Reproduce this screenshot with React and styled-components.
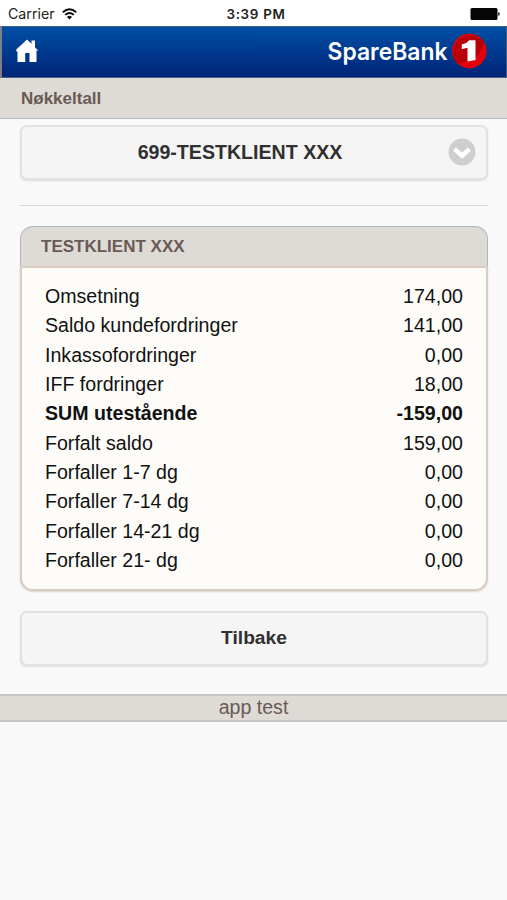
import React from 'react'
import styled, { createGlobalStyle } from 'styled-components'

const GlobalStyle = createGlobalStyle`
  * {
    box-sizing:border-box;
  }
  body {
    margin:0;
    background-color:#f9f9f9;
    font-family:"Liberation Sans", Arial, sans-serif;
    font-size:19.6px;
    color:#111;
  }
`
const Page = styled.div`
  display:flex;
  flex-direction:column;
  min-height:100vh;
`
const StatusBar = styled.div`
  display:grid;
  grid-template-columns:1fr auto 1fr;
  align-items:center;
  height:26px;
  padding:1px 7px 0 8px;
  background-color:#fff;
  font-family:Inter, sans-serif;
  font-size:13.4px;
  color:#222;
`
const Carrier = styled.div`
  display:flex;
  align-items:center;
  gap:7px;
  font-size:14.2px;
`
const Clock = styled.div`
  padding-left:4px;
  font-weight:600;
  font-size:13.4px;
  letter-spacing:0.7px;
`
const Battery = styled.svg`
  justify-self:end;
`
const TopHeader = styled.header`
  display:flex;
  align-items:center;
  justify-content:space-between;
  height:52px;
  padding:0 19px 2px 14px;
  border:1px solid #456285;
  border-left:2px solid #817f83;
  background-image:linear-gradient(#004fa5, #002477);
`
const HomeLink = styled.a`
  display:flex;
`
const Logo = styled.svg`
  display:block;
`
const TitleBar = styled.div`
  display:flex;
  align-items:center;
  height:41px;
  padding:2px 21px 0;
  border-bottom:1px solid #b3bac5;
  background-color:#dedad6;
  font-size:17px;
  font-weight:bold;
  color:#6a5a54;
`
const MainContent = styled.main`
  padding:6px 19px 0 20px;
`
const Button = styled.button`
  display:flex;
  align-items:center;
  justify-content:center;
  width:100%;
  height:55px;
  padding:0 10px 1px;
  border:2px solid #e2e2e2;
  border-radius:7px;
  background-color:#f5f5f5;
  box-shadow:0 1px 2px rgba(0,0,0,0.12);
  font-family:inherit;
  font-size:${props => props.$size || '19.6px'};
  font-weight:bold;
  color:#303030;
`
const ButtonText = styled.span`
  flex-grow:1;
`
const Divider = styled.hr`
  height:1px;
  margin:25px 0 20px;
  border:0;
  background-color:#d7d7d7;
`
const Card = styled.section`
  margin-bottom:20px;
`
const CardHeader = styled.h2`
  display:flex;
  align-items:center;
  height:40px;
  margin:0;
  padding:1px 20px 0;
  border:1px solid #b1b6bd;
  border-bottom:0;
  border-radius:13px 13px 0 0;
  background-color:#dedad6;
  font-size:17px;
  color:#6a5a54;
`
const CardBody = styled.div`
  height:325px;
  padding:13px 23px 0;
  border:2px solid #dacdbf;
  border-radius:0 0 13px 13px;
  background-color:#fdfcf9;
  box-shadow:0 1px 2px rgba(0,0,0,0.14);
`
const Row = styled.div`
  display:flex;
  justify-content:space-between;
  height:29.33px;
  line-height:30px;
  font-weight:${props => (props.$bold ? 'bold' : 'normal')};
`
const Footer = styled.footer`
  height:28px;
  margin-top:28px;
  border-top:2px solid #c4c4c5;
  border-bottom:2px solid #c4c4c5;
  background-color:#dedad6;
  line-height:23px;
  text-align:center;
  color:#6a5a54;
`

const rows = [
  { label: 'Omsetning', value: '174,00' },
  { label: 'Saldo kundefordringer', value: '141,00' },
  { label: 'Inkassofordringer', value: '0,00' },
  { label: 'IFF fordringer', value: '18,00' },
  { label: 'SUM utestående', value: '-159,00', bold: true },
  { label: 'Forfalt saldo', value: '159,00' },
  { label: 'Forfaller 1-7 dg', value: '0,00' },
  { label: 'Forfaller 7-14 dg', value: '0,00' },
  { label: 'Forfaller 14-21 dg', value: '0,00' },
  { label: 'Forfaller 21- dg', value: '0,00' }
]

const WifiIcon = () => (
  <svg width='15' height='12' viewBox='0 0 15 12' fill='none' stroke='#111' strokeWidth='1.9'>
    <path d='M0.8 4.3 Q7.5 -1.6 14.2 4.3' />
    <path d='M3.2 6.9 Q7.5 3.1 11.8 6.9' />
    <path d='M5 8.9 Q7.5 6.8 10 8.9 L7.5 11.5 Z' fill='#111' stroke='none' />
  </svg>
)

const HomeIcon = () => (
  <svg width='23' height='24' viewBox='0 0 23 24' fill='#fff'>
    <path d='M11 0.5 L15.5 4.8 V1.5 H19 V8.5 L22.3 11.5 H20.5 V23 H13.5 V14 H9.2 V23 H1.5 V12.5 H0.3 V10.5 Z' />
  </svg>
)

const SpareBankLogo = () => (
  <Logo width='160' height='38' viewBox='0 0 160 38'>
    <text x='0.5' y='27.5' textLength='120' lengthAdjust='spacingAndGlyphs'
      fontFamily='Inter, sans-serif' fontWeight='600' fontSize='24' fill='#fff'>
      SpareBank
    </text>
    <circle cx='142.3' cy='19' r='17.3' fill='#e5000d' />
    <path d='M130 31.2 A17.3 17.3 0 0 1 157 9.5 Q156 20 147.5 26.5 L140 30 Z' fill='#b90009' />
    <path d='M142 8.3 H148.5 V28 L140.5 29.5 V15.8 L134.8 17.3 V12.3 Q139.8 11.7 142 8.3 Z' fill='#fff' />
  </Logo>
)

const SelectIcon = () => (
  <svg width='28' height='28' viewBox='0 0 28 28' fill='none'>
    <circle cx='14' cy='14' r='13.5' fill='#cecece' />
    <path d='M6.5 11 L14 17.7 L21.5 11' stroke='#fff' strokeWidth='4.4' />
  </svg>
)

const App = () => (
  <Page>
    <GlobalStyle />
    <StatusBar>
      <Carrier>Carrier <WifiIcon /></Carrier>
      <Clock>3:39 PM</Clock>
      <Battery width='30' height='12' viewBox='0 0 30 12'>
        <rect x='0.5' y='0' width='27' height='12' rx='1.5' fill='#050505' />
        <path d='M28.2 4 Q29.8 4.3 29.8 6 Q29.8 7.7 28.2 8 Z' fill='#222' />
      </Battery>
    </StatusBar>
    <TopHeader>
      <HomeLink><HomeIcon /></HomeLink>
      <SpareBankLogo />
    </TopHeader>
    <TitleBar>Nøkkeltall</TitleBar>
    <MainContent>
      <Button>
        <ButtonText>699-TESTKLIENT XXX</ButtonText>
        <SelectIcon />
      </Button>
      <Divider />
      <Card>
        <CardHeader>TESTKLIENT XXX</CardHeader>
        <CardBody>
          {rows.map(row => (
            <Row key={row.label} $bold={row.bold}>
              <span>{row.label}</span>
              <span>{row.value}</span>
            </Row>
          ))}
        </CardBody>
      </Card>
      <Button $size='19.2px'>Tilbake</Button>
    </MainContent>
    <Footer>app test</Footer>
  </Page>
)

export default App
